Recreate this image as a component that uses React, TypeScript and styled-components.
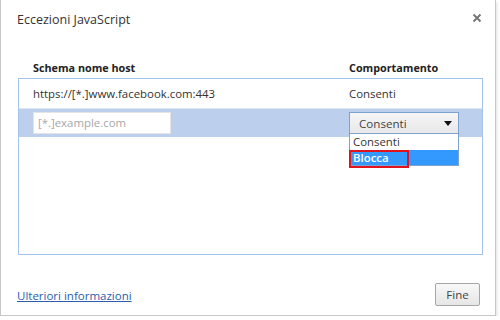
import React from 'react';
import styled, { createGlobalStyle } from 'styled-components';

const GlobalStyle = createGlobalStyle`
  html, body {
    margin: 0;
    padding: 0;
    background: #ffffff;
  }
  body {
    font-family: "Open Sans", "Noto Sans", sans-serif;
    color: #333333;
  }
`;

const Frame = styled.div`
  width: 496px;
  height: 316px;
  box-sizing: border-box;
  border-left: 1px solid #c8c8c8;
  border-right: 1px solid #c8c8c8;
  border-bottom: 1px solid #c8c8c8;
  box-shadow: 1px 2px 3px rgba(0, 0, 0, 0.12);
  background: #ffffff;
  display: flex;
  flex-direction: column;
  padding: 10px 14px 9px 16px;
`;

const TitleBar = styled.div`
  display: flex;
  justify-content: space-between;
  align-items: flex-start;
`;

const Title = styled.div`
  font-size: 12.5px;
  color: #333333;
  line-height: 18px;
  padding-top: 1px;
`;

const Close = styled.div`
  width: 10px;
  height: 10px;
  margin-top: 3px;
  margin-right: -1px;
  color: #777777;
  display: flex;
`;

const Header = styled.div`
  display: grid;
  grid-template-columns: 316px 1fr;
  margin-top: 29px;
  margin-left: 1px;
  padding-left: 15px;
  font-size: 10.8px;
  font-weight: 700;
  color: #222222;
  height: 20px;
  line-height: 20px;
`;

const Table = styled.div`
  margin-left: 1px;
  width: 465px;
  height: 177px;
  box-sizing: border-box;
  border: 1px solid #a4c3e8;
  display: flex;
  flex-direction: column;
`;

const Row = styled.div<{ $selected?: boolean }>`
  display: grid;
  grid-template-columns: 316px 1fr;
  align-items: center;
  height: ${(p) => (p.$selected ? 28 : 29)}px;
  padding-left: 14px;
  background: ${(p) => (p.$selected ? '#bccfec' : 'transparent')};
  border-bottom: ${(p) => (p.$selected ? 'none' : '1px solid #dde7f4')};
  font-size: 11.4px;
  color: #333333;
`;

const Cell = styled.div`
  position: relative;
  white-space: nowrap;
`;

const Input = styled.div`
  width: 138px;
  height: 22px;
  box-sizing: border-box;
  background: #ffffff;
  border: 1px solid #e4e4e4;
  padding-left: 4px;
  line-height: 20px;
  font-size: 11.4px;
  color: #a8a8a8;
`;

const Select = styled.div`
  width: 110px;
  height: 22px;
  box-sizing: border-box;
  border: 1px solid #7da2ce;
  background: linear-gradient(#f6f6f6, #e8e8e8);
  display: flex;
  align-items: center;
  justify-content: space-between;
  padding: 0 6px 0 9px;
  font-size: 11.6px;
  color: #444444;
`;

const Caret = styled.span`
  width: 0;
  height: 0;
  border-left: 4px solid transparent;
  border-right: 4px solid transparent;
  border-top: 5px solid #111111;
`;

const Menu = styled.div`
  position: absolute;
  left: 0;
  top: 22px;
  width: 110px;
  box-sizing: border-box;
  background: #ffffff;
  border: 1px solid #7da2ce;
  border-top: none;
  z-index: 2;
`;

const Option = styled.div<{ $active?: boolean }>`
  position: relative;
  height: ${(p) => (p.$active ? 15 : 16)}px;
  line-height: ${(p) => (p.$active ? 15 : 16)}px;
  padding-left: 3px;
  font-size: 11.4px;
  overflow: visible;
  background: ${(p) => (p.$active ? '#3399ff' : '#ffffff')};
  color: ${(p) => (p.$active ? '#ffffff' : '#333333')};
  font-weight: ${(p) => (p.$active ? 600 : 400)};
`;

const Highlight = styled.div`
  position: absolute;
  left: -1px;
  top: 0;
  width: 60px;
  height: 18px;
  box-sizing: border-box;
  border: 2px solid #e0141e;
`;

const Footer = styled.div`
  margin-top: auto;
  display: flex;
  justify-content: space-between;
  align-items: center;
`;

const Link = styled.a`
  font-size: 11.5px;
  color: #2a5db0;
  text-decoration: underline;
  cursor: pointer;
  margin-top: 2px;
`;

const Button = styled.button`
  width: 45px;
  height: 23px;
  margin-right: 1px;
  border: 1px solid #a6a6a6;
  border-radius: 2px;
  background: linear-gradient(#f8f8f8, #e6e6e6);
  font-family: "Open Sans", "Noto Sans", sans-serif;
  font-size: 11.5px;
  color: #444444;
  padding: 0;
`;

export default function App() {
  return (
    <>
      <GlobalStyle />
      <Frame>
        <TitleBar>
          <Title>Eccezioni JavaScript</Title>
          <Close>
            <svg width="10" height="10" viewBox="0 0 10 10">
              <path d="M1.5 1.5 L8.5 8.5 M8.5 1.5 L1.5 8.5" stroke="currentColor" strokeWidth="2" />
            </svg>
          </Close>
        </TitleBar>
        <Header>
          <span>Schema nome host</span>
          <span>Comportamento</span>
        </Header>
        <Table>
          <Row>
            <Cell>https://[*.]www.facebook.com:443</Cell>
            <Cell>Consenti</Cell>
          </Row>
          <Row $selected>
            <Cell>
              <Input>[*.]example.com</Input>
            </Cell>
            <Cell>
              <Select>
                <span>Consenti</span>
                <Caret />
              </Select>
              <Menu>
                <Option>Consenti</Option>
                <Option $active>
                  Blocca
                  <Highlight />
                </Option>
              </Menu>
            </Cell>
          </Row>
        </Table>
        <Footer>
          <Link>Ulteriori informazioni</Link>
          <Button>Fine</Button>
        </Footer>
      </Frame>
    </>
  );
}
